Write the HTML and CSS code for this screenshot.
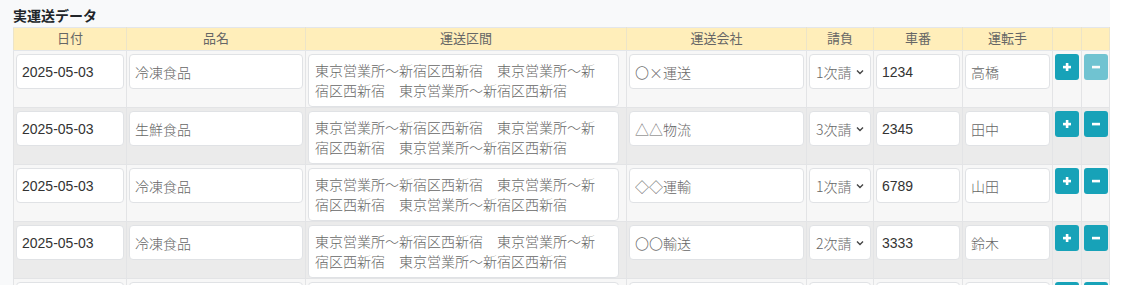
FILE: index.html
```html
<!DOCTYPE html>
<html lang="ja">
<head>
    <meta charset="UTF-8">
    <title>実運送データ</title>
    <link rel="stylesheet" href="styles.css">
</head>
<body>
    <div class="panel">
        <h2 class="panel-title">実運送データ</h2>
        <table class="transport-table">
            <colgroup>
                <col style="width:113px">
                <col style="width:179px">
                <col style="width:321px">
                <col style="width:180px">
                <col style="width:67px">
                <col style="width:89px">
                <col style="width:90px">
                <col style="width:29px">
                <col style="width:28px">
            </colgroup>
            <thead>
                <tr>
                    <th>日付</th>
                    <th>品名</th>
                    <th>運送区間</th>
                    <th>運送会社</th>
                    <th>請負</th>
                    <th>車番</th>
                    <th>運転手</th>
                    <th></th>
                    <th></th>
                </tr>
            </thead>
            <tbody>
                <tr>
                    <td><input class="field" type="text" value="2025-05-03"></td>
                    <td><input class="field jp" type="text" value="冷凍食品"></td>
                    <td><textarea class="field jp route">東京営業所〜新宿区西新宿　東京営業所〜新宿区西新宿　東京営業所〜新宿区西新宿</textarea></td>
                    <td><input class="field jp" type="text" value="〇×運送"></td>
                    <td><select class="field jp pick"><option selected>1次請</option><option>2次請</option><option>3次請</option></select></td>
                    <td><input class="field" type="text" value="1234"></td>
                    <td><input class="field jp" type="text" value="高橋"></td>
                    <td><button class="btn-row"><svg width="10" height="10" viewBox="0 0 10 10"><rect x="3.8" y="1" width="2.6" height="8" fill="#fff"/><rect x="1" y="3.8" width="8" height="2.6" fill="#fff"/></svg></button></td>
                    <td><button class="btn-row" disabled><svg width="10" height="10" viewBox="0 0 10 10"><rect x="1" y="3.8" width="8" height="2.6" fill="#fff"/></svg></button></td>
                </tr>
                <tr>
                    <td><input class="field" type="text" value="2025-05-03"></td>
                    <td><input class="field jp" type="text" value="生鮮食品"></td>
                    <td><textarea class="field jp route">東京営業所〜新宿区西新宿　東京営業所〜新宿区西新宿　東京営業所〜新宿区西新宿</textarea></td>
                    <td><input class="field jp" type="text" value="△△物流"></td>
                    <td><select class="field jp pick"><option>1次請</option><option>2次請</option><option selected>3次請</option></select></td>
                    <td><input class="field" type="text" value="2345"></td>
                    <td><input class="field jp" type="text" value="田中"></td>
                    <td><button class="btn-row"><svg width="10" height="10" viewBox="0 0 10 10"><rect x="3.8" y="1" width="2.6" height="8" fill="#fff"/><rect x="1" y="3.8" width="8" height="2.6" fill="#fff"/></svg></button></td>
                    <td><button class="btn-row"><svg width="10" height="10" viewBox="0 0 10 10"><rect x="1" y="3.8" width="8" height="2.6" fill="#fff"/></svg></button></td>
                </tr>
                <tr>
                    <td><input class="field" type="text" value="2025-05-03"></td>
                    <td><input class="field jp" type="text" value="冷凍食品"></td>
                    <td><textarea class="field jp route">東京営業所〜新宿区西新宿　東京営業所〜新宿区西新宿　東京営業所〜新宿区西新宿</textarea></td>
                    <td><input class="field jp" type="text" value="◇◇運輸"></td>
                    <td><select class="field jp pick"><option selected>1次請</option><option>2次請</option><option>3次請</option></select></td>
                    <td><input class="field" type="text" value="6789"></td>
                    <td><input class="field jp" type="text" value="山田"></td>
                    <td><button class="btn-row"><svg width="10" height="10" viewBox="0 0 10 10"><rect x="3.8" y="1" width="2.6" height="8" fill="#fff"/><rect x="1" y="3.8" width="8" height="2.6" fill="#fff"/></svg></button></td>
                    <td><button class="btn-row"><svg width="10" height="10" viewBox="0 0 10 10"><rect x="1" y="3.8" width="8" height="2.6" fill="#fff"/></svg></button></td>
                </tr>
                <tr>
                    <td><input class="field" type="text" value="2025-05-03"></td>
                    <td><input class="field jp" type="text" value="冷凍食品"></td>
                    <td><textarea class="field jp route">東京営業所〜新宿区西新宿　東京営業所〜新宿区西新宿　東京営業所〜新宿区西新宿</textarea></td>
                    <td><input class="field jp" type="text" value="〇〇輸送"></td>
                    <td><select class="field jp pick"><option>1次請</option><option selected>2次請</option><option>3次請</option></select></td>
                    <td><input class="field" type="text" value="3333"></td>
                    <td><input class="field jp" type="text" value="鈴木"></td>
                    <td><button class="btn-row"><svg width="10" height="10" viewBox="0 0 10 10"><rect x="3.8" y="1" width="2.6" height="8" fill="#fff"/><rect x="1" y="3.8" width="8" height="2.6" fill="#fff"/></svg></button></td>
                    <td><button class="btn-row"><svg width="10" height="10" viewBox="0 0 10 10"><rect x="1" y="3.8" width="8" height="2.6" fill="#fff"/></svg></button></td>
                </tr>
                <tr>
                    <td><input class="field" type="text" value="2025-05-03"></td>
                    <td><input class="field jp" type="text" value="冷凍食品"></td>
                    <td><textarea class="field jp route">東京営業所〜新宿区西新宿　東京営業所〜新宿区西新宿　東京営業所〜新宿区西新宿</textarea></td>
                    <td><input class="field jp" type="text" value="〇〇輸送"></td>
                    <td><select class="field jp pick"><option selected>1次請</option><option>2次請</option><option>3次請</option></select></td>
                    <td><input class="field" type="text" value="5555"></td>
                    <td><input class="field jp" type="text" value="佐藤"></td>
                    <td><button class="btn-row"><svg width="10" height="10" viewBox="0 0 10 10"><rect x="3.8" y="1" width="2.6" height="8" fill="#fff"/><rect x="1" y="3.8" width="8" height="2.6" fill="#fff"/></svg></button></td>
                    <td><button class="btn-row"><svg width="10" height="10" viewBox="0 0 10 10"><rect x="1" y="3.8" width="8" height="2.6" fill="#fff"/></svg></button></td>
                </tr>
            </tbody>
        </table>
    </div>
</body>
</html>
```

FILE: styles.css
```css
body {
    margin: 0;
    background: #fff;
    font-family: "Liberation Sans", "Noto Sans CJK JP", sans-serif;
    font-size: 14px;
    color: #212529;
    overflow: hidden;
}
.panel {
    width: 1110px;
    height: 285px;
    background: #f8f9fa;
    padding: 6px 0 0 13px;
    box-sizing: border-box;
}
.panel-title {
    margin: 0 0 1px;
    font-size: 14px;
    line-height: 20px;
    font-weight: bold;
    color: #212529;
}
.transport-table {
    border-collapse: collapse;
    table-layout: fixed;
    width: 1096px;
}
.transport-table th {
    background: #ffeeba;
    border: 1px solid #ece4c8;
    border-top-color: #e3e6ea;
    border-bottom-color: #e3e6ea;
    color: #666;
    font-weight: normal;
    font-size: 13px;
    line-height: 20px;
    padding: 1px 0;
    text-align: center;
}
.transport-table td {
    border: 1px solid #e3e4e6;
    border-top: none;
    padding: 3px 2px 0;
    vertical-align: top;
}
.transport-table tbody tr:nth-child(odd) td {
    background: #f7f7f7;
}
.transport-table tbody tr:nth-child(even) td {
    background: #ebebeb;
}
.field {
    display: block;
    width: 100%;
    height: 35px;
    box-sizing: border-box;
    border: 1px solid #e0e2e5;
    border-radius: 4px;
    background: #fff;
    padding: 0 5px;
    font-family: "Liberation Sans", "Noto Sans CJK JP", sans-serif;
    font-size: 14px;
    color: #333;
    outline: none;
}
.jp {
    font-family: "Noto Sans CJK JP", "Liberation Sans", sans-serif;
    font-weight: 300;
    color: #666;
}
.route {
    width: 311px;
    height: 53px;
    padding: 5px 14px 5px 6px;
    line-height: 20px;
    resize: none;
    overflow: hidden;
}
.pick {
    appearance: none;
    -webkit-appearance: none;
    padding: 0 16px 0 6px;
    background: #fff url("data:image/svg+xml;utf8,<svg xmlns='http://www.w3.org/2000/svg' width='8' height='6' viewBox='0 0 8 6'><path d='M1 1.5 L4 4.5 L7 1.5' fill='none' stroke='%23444' stroke-width='1.4'/></svg>") no-repeat right 6px center;
}
.btn-row {
    display: flex;
    align-items: center;
    justify-content: center;
    width: 24px;
    height: 26px;
    padding: 0;
    border: none;
    border-radius: 3px;
    background: #17a2b8;
    cursor: pointer;
}
.btn-row:disabled {
    opacity: .6;
    cursor: default;
}
```
